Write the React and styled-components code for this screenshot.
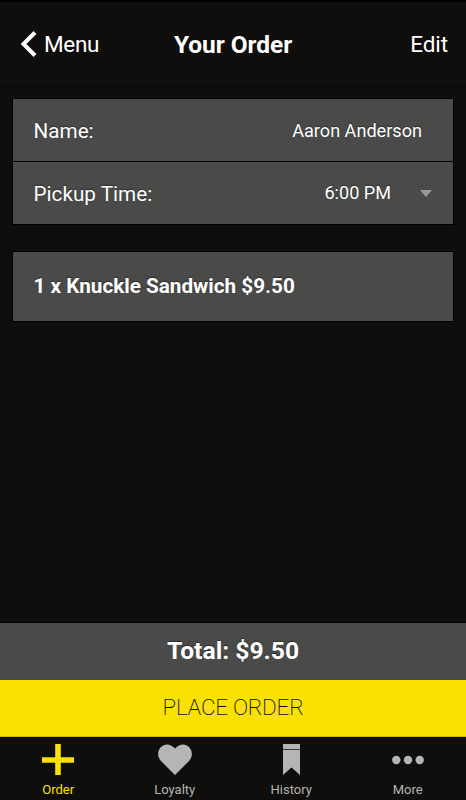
import React from "react";
import styled, { createGlobalStyle } from "styled-components";

const Global = createGlobalStyle`
  * { box-sizing: border-box; }
  body { margin: 0; background: #0f0e0c; font-family: Roboto, "Liberation Sans", sans-serif; color: #fff; }
`;
const Screen = styled.div`display: flex; flex-direction: column; width: 466px; height: 800px; overflow: hidden; border-top: 2px solid #000;`;
const Header = styled.header`display: grid; grid-template-columns: 1fr auto 1fr; align-items: center; height: 86px; padding: 0 18px 2px 20px; border-bottom: 1px solid #090806; flex: none;`;
const HeaderLink = styled.span`display: flex; align-items: center; gap: 7px; font-size: 22.5px; letter-spacing: ${(p) => (p.$end ? "-0.1px" : "-0.3px")}; line-height: 28px; justify-self: ${(p) => (p.$end ? "end" : "start")};`;
const Title = styled.h1`margin: 0 2px 0 0; padding-top: 2px; font-size: 24.5px; letter-spacing: -0.05px; line-height: 28px; font-weight: 700;`;
const Content = styled.main`flex: 1; padding: 11px 13px 0;`;
const Card = styled.section`background: #4a4a48; margin-bottom: 28px; box-shadow: 0 0 0 1px #000; text-shadow: 0 -1px 1px #0006;`;
const Row = styled.div`display: flex; align-items: center; height: ${(p) => p.$height}px; padding: 0 21px 0 20.5px; & + & { border-top: 1px solid #000; }`;
const Label = styled.span`flex: 1; font-size: 20.7px; padding-top: 1px;`;
const Value = styled.span`font-size: 18.1px; padding-bottom: ${(p) => (p.$gap ? 2 : 0)}px; margin-right: ${(p) => p.$gap || 10}px;`;
const Item = styled.strong`font-size: 20.7px; font-weight: 700; padding-bottom: 2px;`;
const Total = styled.div`height: 57px; flex: none; background: #4a4a48; display: flex; align-items: center; justify-content: center; padding-bottom: 2px; font-size: 24.7px; font-weight: 700; box-shadow: 0 -1px 0 #000; text-shadow: 0 -1px 1px #0006;`;
const PlaceOrder = styled.button`height: 57px; flex: none; border: 0; border-bottom: 1px solid #cbb80a; background: #f9e104; color: #100f0c; padding: 0 0 2px; font: 200 22.5px Roboto, sans-serif; letter-spacing: -0.25px;`;
const Tabs = styled.nav`height: 63px; flex: none; display: grid; grid-template-columns: repeat(4, 1fr);`;
const Tab = styled.div`display: flex; flex-direction: column; align-items: center; color: ${(p) => (p.$active ? "#f9e104" : "#b5b5b5")}; font-size: 13px; line-height: 16px; padding-top: 6px; gap: 5px;`;

const icons = {
  Order: <path d="M14.2 1h5.6v13.2H33v5.6H19.8V32h-5.6V19.8H1v-5.6h13.2z" />,
  Loyalty: <path d="M17 32L2.5 17.5C-5 8 7-5 17 5.5 27-5 39 8 31.5 17.5z" />,
  History: <path d="M9 1h17v5.2H9zM9 7h17v25l-8.5-7.5L9 32z" />,
  More: <><circle cx="5.3" cy="17" r="4.2" /><circle cx="17" cy="17" r="4.2" /><circle cx="28.7" cy="17" r="4.2" /></>,
};

export default function App() {
  return (
    <>
      <Global />
      <Screen>
        <Header>
          <HeaderLink><svg width="17" height="26" fill="none" stroke="#fff" strokeWidth="4"><path d="M15 1.5L3.5 13 15 24.5" /></svg>Menu</HeaderLink>
          <Title>Your Order</Title>
          <HeaderLink $end>Edit</HeaderLink>
        </Header>
        <Content>
          <Card>
            <Row $height={62}><Label>Name:</Label><Value>Aaron Anderson</Value></Row>
            <Row $height={63}><Label>Pickup Time:</Label><Value $gap={29}>6:00 PM</Value><svg width="12" height="7" fill="#999"><path d="M0 0h12L6 7z" /></svg></Row>
          </Card>
          <Card><Row $height={69}><Item>1 x Knuckle Sandwich $9.50</Item></Row></Card>
        </Content>
        <Total>Total: $9.50</Total>
        <PlaceOrder>PLACE ORDER</PlaceOrder>
        <Tabs>
          {Object.entries(icons).map(([name, icon], i) => (
            <Tab key={name} $active={i === 0}><svg width="34" height="34" overflow="visible" fill="currentColor">{icon}</svg>{name}</Tab>
          ))}
        </Tabs>
      </Screen>
    </>
  );
}
